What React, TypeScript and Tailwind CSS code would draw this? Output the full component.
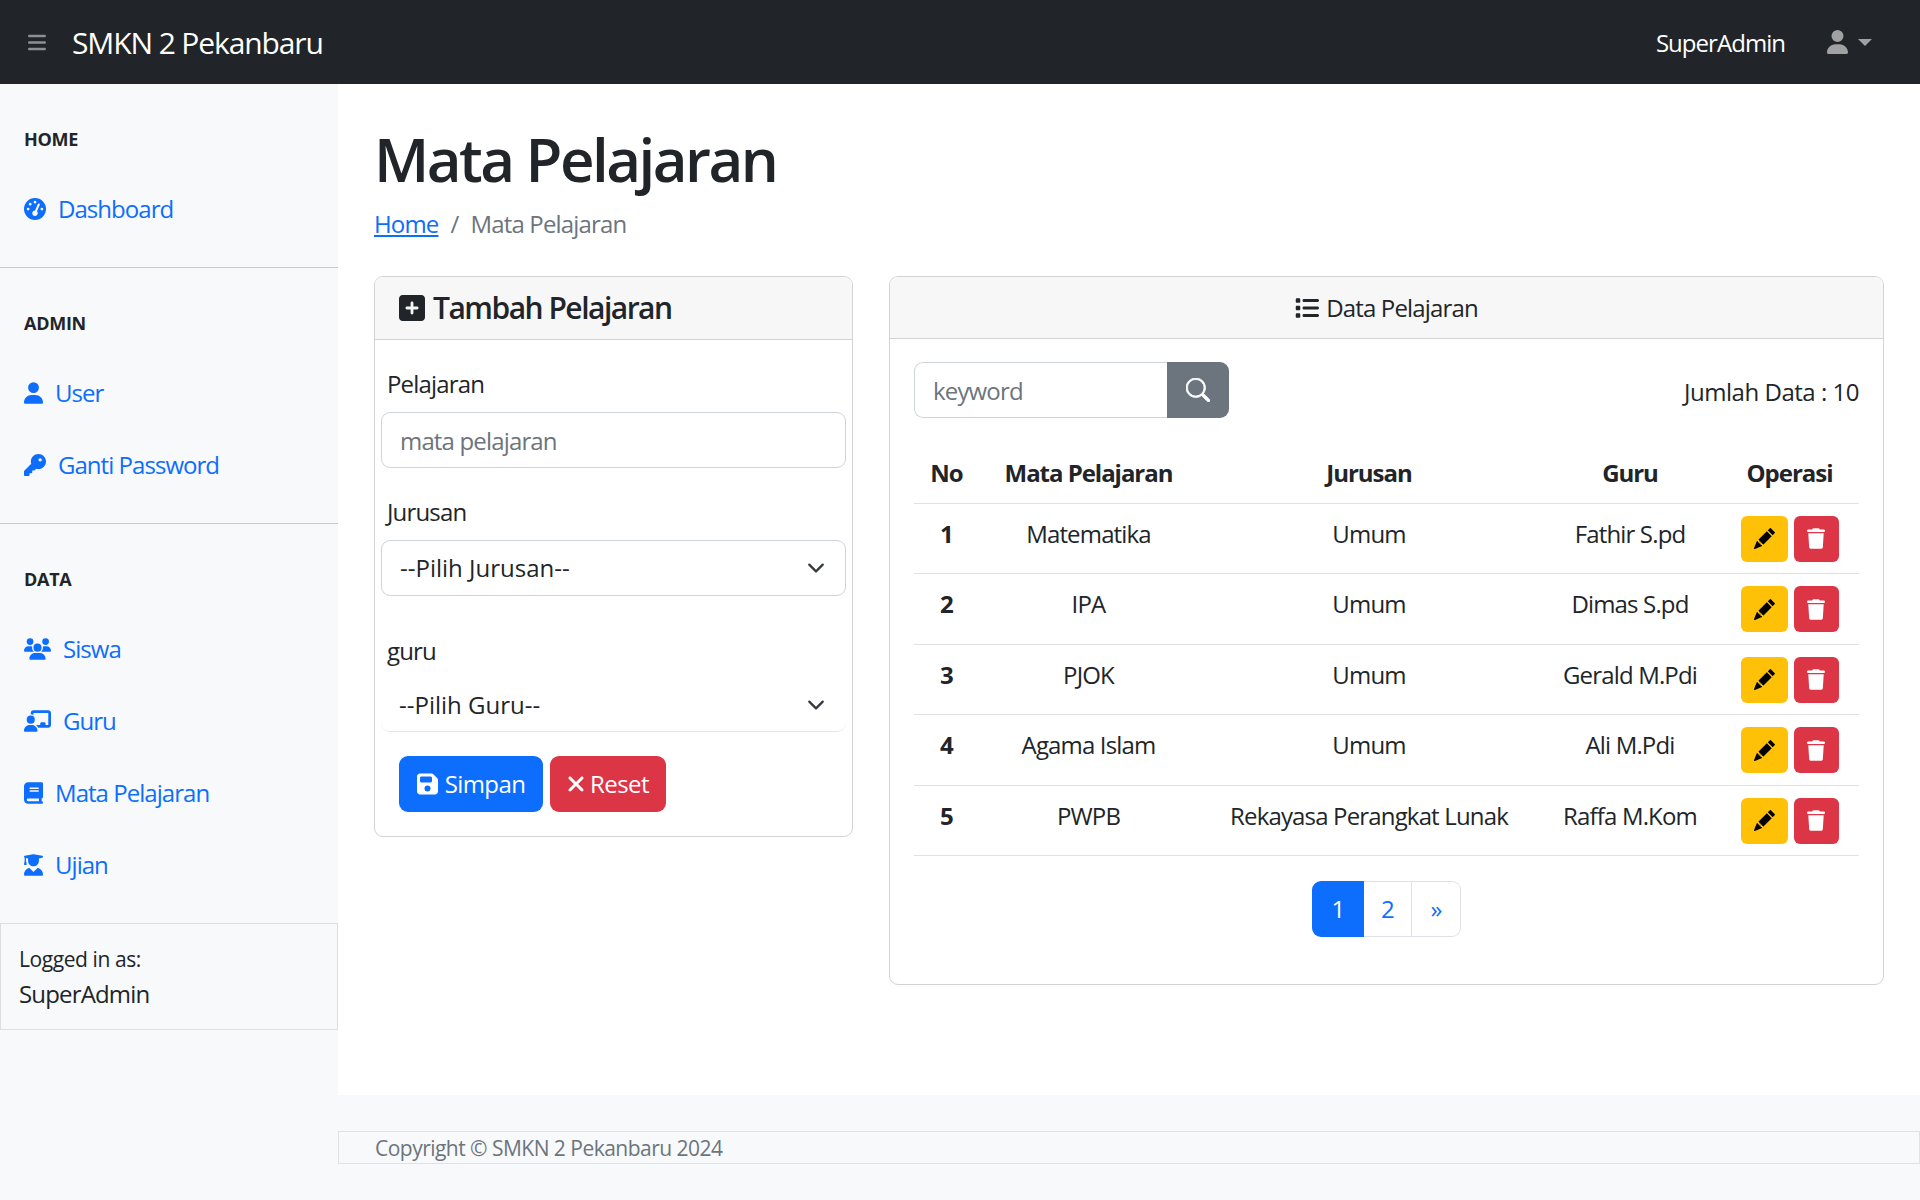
import React from "react";
import {
  FaBars, FaUser, FaGaugeHigh, FaKey, FaUsers, FaChalkboardUser, FaBook, FaUserGraduate,
  FaSquarePlus, FaList, FaFloppyDisk, FaTrash, FaXmark,
} from "react-icons/fa6";
import { BsSearch, BsPencilFill } from "react-icons/bs";

function Heading({ children }: { children: React.ReactNode }) {
  return <div className="pt-[42px] pb-[18px] px-[24px] h-[87px] text-[18px] leading-[27px] font-bold uppercase text-[#212529] tracking-[-0.015em]">{children}</div>;
}

function NavLink({ icon, label }: { icon: React.ReactNode; label: string }) {
  return (
    <a className="flex items-center gap-[12px] h-[72px] px-[24px] pt-[3px] text-[#0d6efd] text-[24px] tracking-[-0.04em]">
      {icon}
      <span>{label}</span>
    </a>
  );
}

function Divider() {
  return <div className="mt-[24px] border-t border-[#c9cacb]" />;
}

function Chevron() {
  return (
    <svg viewBox="0 0 16 16" className="absolute right-[21px] top-1/2 -translate-y-1/2 w-[18px] h-[18px]" fill="none" stroke="#343a40" strokeWidth="2" strokeLinecap="round" strokeLinejoin="round">
      <path d="m2 5 6 6 6-6" />
    </svg>
  );
}

const rows = [
  ["1", "Matematika", "Umum", "Fathir S.pd"],
  ["2", "IPA", "Umum", "Dimas S.pd"],
  ["3", "PJOK", "Umum", "Gerald M.Pdi"],
  ["4", "Agama Islam", "Umum", "Ali M.Pdi"],
  ["5", "PWPB", "Rekayasa Perangkat Lunak", "Raffa M.Kom"],
];

export default function App() {
  return (
    <div className="min-h-[1200px] flex flex-col bg-[#f8f9fa] text-[#212529] text-[24px] leading-[36px] font-['Open_Sans','Noto_Sans',sans-serif] tracking-[-0.035em]">
      <header className="h-[84px] bg-[#212529] flex items-center shrink-0">
        <FaBars className="ml-[28px] h-[21px] w-[18px] text-[#8d8f92]" />
        <span className="ml-[26px] pt-[2px] text-[30px] text-white tracking-[-0.037em]">SMKN 2 Pekanbaru</span>
        <span className="ml-auto pt-[2px] text-white tracking-[-0.04em]">SuperAdmin</span>
        <FaUser className="ml-[42px] h-[24px] w-[21px] text-[#a0a1a3]" />
        <span className="ml-[10px] mr-[48px] w-0 h-0 border-t-[7px] border-x-[7px] border-t-[#a0a1a3] border-x-transparent" />
      </header>
      <div className="flex flex-1">
        <aside className="w-[338px] shrink-0">
          <Heading>Home</Heading>
          <NavLink icon={<FaGaugeHigh className="h-[22px] w-[22px] shrink-0" />} label="Dashboard" />
          <Divider />
          <Heading>Admin</Heading>
          <NavLink icon={<FaUser className="h-[22px] w-[19px] shrink-0" />} label="User" />
          <NavLink icon={<FaKey className="h-[22px] w-[22px] shrink-0" />} label="Ganti Password" />
          <Divider />
          <Heading>Data</Heading>
          <NavLink icon={<FaUsers className="h-[22px] w-[27px] shrink-0" />} label="Siswa" />
          <NavLink icon={<FaChalkboardUser className="h-[22px] w-[27px] shrink-0" />} label="Guru" />
          <NavLink icon={<FaBook className="h-[22px] w-[19px] shrink-0" />} label="Mata Pelajaran" />
          <NavLink icon={<FaUserGraduate className="h-[22px] w-[19px] shrink-0" />} label="Ujian" />
          <div className="mt-[24px] h-[107px] border border-[#dcdee0] px-[18px] pt-[19px]">
            <div className="text-[21px] leading-[33px] tracking-[-0.02em]">Logged in as:</div>
            <div className="tracking-[-0.035em]">SuperAdmin</div>
          </div>
        </aside>
        <div className="flex-1 flex flex-col min-w-0">
          <main className="h-[1011px] bg-white px-[36px]">
            <h1 className="mt-[39px] text-[60px] leading-[72px] font-semibold tracking-[-0.042em]">Mata Pelajaran</h1>
            <div className="mt-[11px] flex items-center gap-[12px] text-[#6c757d]">
              <a className="text-[#0d6efd] underline">Home</a>
              <span>/</span>
              <span>Mata Pelajaran</span>
            </div>
            <div className="mt-[34px] flex gap-[36px] items-start">
              <section className="w-[479px] h-[561px] shrink-0 border border-[#d3d3d3] rounded-[9px] overflow-hidden">
                <div className="h-[63px] bg-[#f7f7f7] border-b border-[#d3d3d3] flex items-center gap-[8px] pl-[24px] text-[30px] font-semibold tracking-[-0.05em]">
                  <FaSquarePlus className="h-[30px] w-[26px]" />
                  <span>Tambah Pelajaran</span>
                </div>
                <div className="px-[6px] pt-[26px]">
                  <label className="block px-[6px] mb-[10px]">Pelajaran</label>
                  <input placeholder="mata pelajaran" className="w-full h-[56px] border border-[#ced4da] rounded-[9px] px-[18px] outline-none placeholder:text-[#6c757d]" />
                  <label className="block px-[6px] mt-[26px] mb-[10px]">Jurusan</label>
                  <div className="relative">
                    <select className="w-full h-[56px] border border-[#ced4da] rounded-[9px] px-[18px] appearance-none bg-white outline-none tracking-normal">
                      <option>--Pilih Jurusan--</option>
                    </select>
                    <Chevron />
                  </div>
                  <label className="block px-[6px] mt-[37px] mb-[9px]">guru</label>
                  <div className="relative">
                    <select className="w-full h-[54px] border-b border-[#e4e6e9] rounded-[9px] px-[18px] appearance-none bg-white outline-none tracking-normal">
                      <option>--Pilih Guru--</option>
                    </select>
                    <Chevron />
                  </div>
                  <div className="mt-[24px] ml-[18px] flex gap-[7px] text-white tracking-[-0.025em]">
                    <button className="w-[144px] h-[56px] rounded-[9px] bg-[#0d6efd] flex items-center justify-center gap-[7px]">
                      <FaFloppyDisk className="h-[24px] w-[21px]" />
                      <span>Simpan</span>
                    </button>
                    <button className="w-[116px] h-[56px] rounded-[9px] bg-[#dc3545] flex items-center justify-center gap-[5px]">
                      <FaXmark className="h-[24px] w-[18px]" />
                      <span>Reset</span>
                    </button>
                  </div>
                </div>
              </section>
              <section className="flex-1 h-[709px] border border-[#d3d3d3] rounded-[9px] overflow-hidden">
                <div className="h-[62px] bg-[#f7f7f7] border-b border-[#d3d3d3] flex items-center justify-center gap-[7px]">
                  <FaList className="h-[24px] w-[24px]" />
                  <span>Data Pelajaran</span>
                </div>
                <div className="px-[24px] pt-[23px]">
                  <div className="flex items-center justify-between h-[56px]">
                    <div className="flex">
                      <input placeholder="keyword" className="w-[253px] h-[56px] border border-[#ced4da] border-r-0 rounded-l-[9px] px-[18px] outline-none placeholder:text-[#6c757d]" />
                      <button className="w-[62px] h-[56px] rounded-r-[9px] bg-[#6c757d] flex items-center justify-center text-white">
                        <BsSearch className="h-[24px] w-[24px]" stroke="currentColor" strokeWidth="0.5" />
                      </button>
                    </div>
                    <span className="pt-[3px] tracking-[-0.02em]">Jumlah Data : 10</span>
                  </div>
                  <table className="mt-[25px] w-[945px] table-fixed border-collapse text-center">
                    <colgroup>
                      <col className="w-[65px]" />
                      <col className="w-[219px]" />
                      <col className="w-[342px]" />
                      <col className="w-[180px]" />
                      <col className="w-[139px]" />
                    </colgroup>
                    <thead>
                      <tr className="h-[60px] border-b border-[#dee2e6] tracking-[-0.043em]">
                        <th className="font-bold">No</th>
                        <th className="font-bold">Mata Pelajaran</th>
                        <th className="font-bold">Jurusan</th>
                        <th className="font-bold">Guru</th>
                        <th className="font-bold">Operasi</th>
                      </tr>
                    </thead>
                    <tbody>
                      {rows.map((r) => (
                        <tr key={r[0]} className="h-[70.5px] border-b border-[#dee2e6]">
                          <td className="align-top pt-[12px] font-bold">{r[0]}</td>
                          <td className="align-top pt-[12px]">{r[1]}</td>
                          <td className="align-top pt-[12px]">{r[2]}</td>
                          <td className="align-top pt-[12px]">{r[3]}</td>
                          <td className="align-top pt-[12px]">
                            <div className="flex justify-center gap-[6px]">
                              <button className="w-[47px] h-[46px] rounded-[6px] bg-[#ffc107] flex items-center justify-center text-black"><BsPencilFill className="h-[21px] w-[21px]" /></button>
                              <button className="w-[45px] h-[46px] rounded-[6px] bg-[#dc3545] flex items-center justify-center text-white"><FaTrash className="h-[21px] w-[18px]" /></button>
                            </div>
                          </td>
                        </tr>
                      ))}
                    </tbody>
                  </table>
                  <div className="mt-[25px] flex justify-center h-[56px] text-[#0d6efd]">
                    <a className="w-[52px] rounded-l-[9px] bg-[#0d6efd] text-white flex items-center justify-center">1</a>
                    <a className="w-[48px] border-y border-r border-[#dee2e6] flex items-center justify-center">2</a>
                    <a className="w-[49px] border-y border-r border-[#dee2e6] rounded-r-[9px] flex items-center justify-center">»</a>
                  </div>
                </div>
              </section>
            </div>
          </main>
          <footer className="mt-[36px] mb-[37px] h-[33px] border border-[#dee2e6] pl-[36px] text-[21px] leading-[33px] text-[#6c757d] tracking-[-0.025em]">
            Copyright © SMKN 2 Pekanbaru 2024
          </footer>
        </div>
      </div>
    </div>
  );
}
